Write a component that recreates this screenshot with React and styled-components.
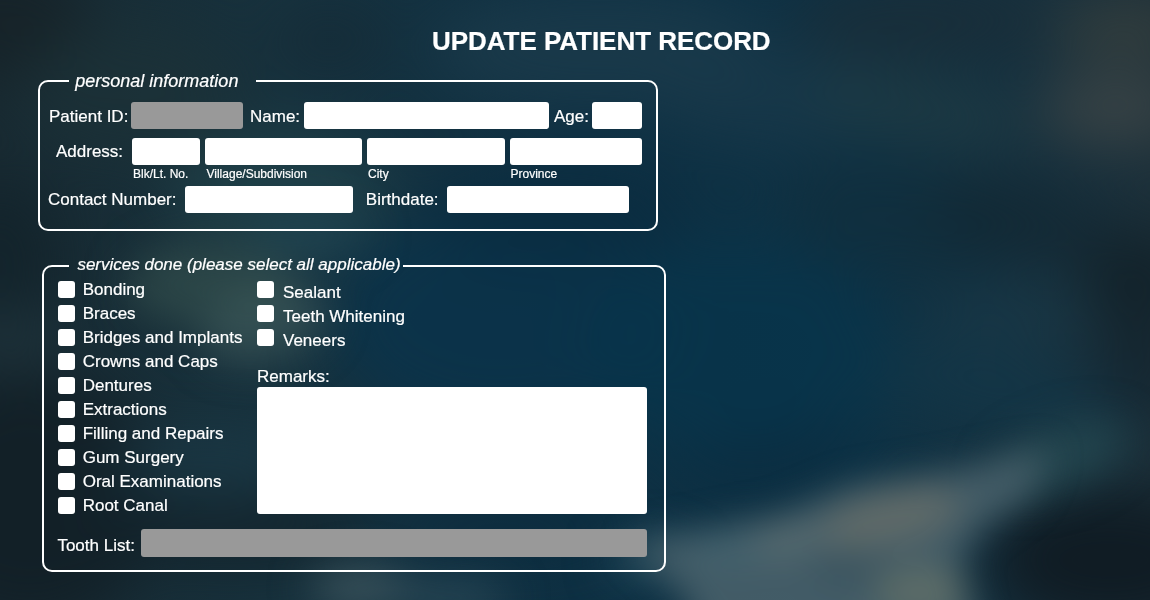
import React from "react";
import styled, { createGlobalStyle } from "styled-components";

const GlobalStyle = createGlobalStyle`
  *, *::before, *::after { box-sizing: border-box; }
  body { margin: 0; background: #102d3e; }
`;

const Page = styled.main`
  position: relative;
  isolation: isolate;
  overflow: hidden;
  width: 1150px;
  height: 600px;
  padding: 26px 0 0 38px;
  color: #fff;
  font-family: "Liberation Sans", Arial, sans-serif;
  font-size: 17px;
  -webkit-text-stroke: 0.2px #fff;
`;

const Backdrop = styled.svg`
  position: absolute;
  inset: 0;
  z-index: -1;
  width: 100%;
  height: 100%;
`;

const Title = styled.h1`
  margin: 0 0 15px 394px;
  font-size: 26px;
  line-height: 30px;
  font-weight: 700;
  letter-spacing: -0.04px;
  white-space: nowrap;
`;

const Panel = styled.fieldset`
  display: block;
  width: ${(p) => p.$width}px;
  height: ${(p) => p.$height}px;
  min-width: 0;
  margin: ${(p) => p.$margin || "0"};
  padding: ${(p) => p.$padding};
  border: 2px solid #fff;
  border-radius: 10px;
`;

const Legend = styled.legend`
  width: ${(p) => p.$width}px;
  height: 20px;
  margin-left: ${(p) => p.$offset}px;
  padding: 0 0 0 ${(p) => p.$inset}px;
  font-size: ${(p) => p.$size}px;
  line-height: ${(p) => p.$line}px;
  font-style: italic;
  white-space: nowrap;
`;

const Row = styled.div`
  display: flex;
  align-items: flex-start;
  height: ${(p) => p.$height || 27}px;
  margin-top: ${(p) => p.$gap || 0}px;
`;

const Label = styled.label`
  flex: none;
  width: ${(p) => p.$width}px;
  padding-left: ${(p) => p.$inset || 0}px;
  line-height: ${(p) => p.$line || 28}px;
  white-space: nowrap;
`;

const Input = styled.input`
  display: block;
  flex: none;
  width: ${(p) => p.$width}px;
  height: ${(p) => p.$height || 27}px;
  margin: 0;
  padding: 0 6px;
  border: 0;
  border-radius: 3px;
  background: ${(p) => (p.readOnly ? "#999" : "#fff")};
  font: inherit;
  color: #111;
`;

const AddressParts = styled.div`
  display: flex;
  gap: 5px;
`;

const AddressPart = styled.div`
  width: ${(p) => p.$width}px;
`;

const Hint = styled.div`
  padding-left: ${(p) => p.$inset}px;
  margin-top: 2px;
  font-size: 12px;
  line-height: 14px;
  white-space: nowrap;
`;

const Services = styled.div`
  display: grid;
  grid-template-columns: 199px 390px;
`;

const ServiceList = styled.div`
  display: grid;
  grid-auto-rows: 24px;
`;

const Service = styled.label`
  display: flex;
  align-items: flex-start;
  gap: ${(p) => (p.$lowered ? 9 : 7.7)}px;
  line-height: 17px;
  white-space: nowrap;

  span { margin-top: ${(p) => (p.$lowered ? 3 : 0)}px; }
`;

const Checkbox = styled.input`
  appearance: none;
  flex: none;
  width: 17px;
  height: 17px;
  margin: 0;
  border-radius: 3px;
  background: #fff;
`;

const Remarks = styled.textarea`
  display: block;
  width: 390px;
  height: 127px;
  margin: 0;
  padding: 6px;
  border: 0;
  border-radius: 3px;
  background: #fff;
  resize: none;
`;

const RemarksLabel = styled.label`
  display: block;
  margin-top: 14px;
  padding-bottom: 1px;
  line-height: 19px;
`;

const ToothRow = styled(Row)`
  margin-left: -0.6px;

  input { margin-left: 0.6px; }
`;

const FIRST = ["Bonding", "Braces", "Bridges and Implants", "Crowns and Caps", "Dentures", "Extractions", "Filling and Repairs", "Gum Surgery", "Oral Examinations", "Root Canal"];
const SECOND = ["Sealant", "Teeth Whitening", "Veneers"];
const ADDRESS = [
  { name: "Blk/Lt. No.", width: 68, inset: 1 },
  { name: "Village/Subdivision", width: 157, inset: 1.5 },
  { name: "City", width: 138, inset: 1 },
  { name: "Province", width: 132, inset: 0.5 },
];

/* Soft patches of light and shade: [cx, cy, rx, ry, rotation, colour, opacity] */
const WIDE = [
  [0, 20, 90, 60, 0, "#162228", 0.9],
  [0, 260, 60, 80, 0, "#13232b", 0.9],
  [10, 340, 60, 25, 0, "#243a43", 0.7],
  [30, 500, 130, 130, 0, "#121f26", 0.85],
  [230, 530, 140, 40, 0, "#13232c", 0.85],
  [210, 465, 100, 30, 0, "#1b3b48", 0.8],
  [130, 90, 110, 70, 0, "#1d3238", 0.7],
  [280, 190, 110, 60, 0, "#22454b", 0.7],
  [330, 40, 60, 30, 0, "#152a35", 0.7],
  [500, 320, 170, 110, 0, "#0a334b", 0.8],
  [560, 215, 130, 45, 0, "#0a2c40", 0.8],
  [740, 350, 150, 110, 0, "#07344b", 0.8],
  [600, 50, 170, 60, 0, "#1c3b4b", 0.8],
  [780, 100, 120, 50, 0, "#1a394a", 0.7],
  [920, 110, 110, 35, 10, "#1f3b44", 0.8],
  [920, 20, 130, 40, 0, "#1a2e38", 0.9],
  [900, 220, 120, 60, 10, "#102e3d", 0.8],
  [1020, 220, 90, 40, 10, "#132833", 0.8],
  [1140, 280, 60, 50, 0, "#122129", 0.9],
  [1010, 315, 90, 25, 0, "#1a3a4a", 0.7],
  [1140, 370, 50, 50, 0, "#14242e", 0.8],
  [1000, 390, 130, 35, 10, "#133749", 0.8],
  [1110, 560, 120, 70, 0, "#101c24", 1],
  [770, 460, 90, 25, -10, "#0a2b3e", 0.7],
  [500, 530, 120, 25, 0, "#0b2a3d", 0.8],
  [1125, 28, 75, 22, 0, "#42463f", 0.8],
  [1115, 108, 75, 35, 0, "#3d4647", 0.9],
];

const NARROW = [
  [210, 285, 85, 42, 0, "#36524f", 0.65],
  [265, 325, 65, 36, -15, "#456060", 0.55],
  [310, 235, 60, 25, 0, "#22495a", 0.5],
  [1060, 458, 70, 28, -20, "#264a52", 0.85],
  [360, 588, 50, 20, 0, "#435a62", 0.9],
  [450, 598, 60, 14, 0, "#345461", 0.8],
  [650, 560, 45, 24, 0, "#23495a", 0.8],
];

const GLOW = [
  [890, 518, 72, 26, -12, "#696f6a", 0.75],
  [785, 540, 45, 18, -10, "#5d6d72", 0.7],
  [920, 592, 48, 26, 0, "#637068", 0.8],
  [850, 570, 42, 15, 0, "#3b525c", 0.8],
  [725, 550, 38, 18, 0, "#43626f", 0.7],
];

const patch = ([cx, cy, rx, ry, angle, fill, opacity], i) => (
  <ellipse key={i} cx={cx} cy={cy} rx={rx} ry={ry} fill={fill} opacity={opacity} transform={`rotate(${angle} ${cx} ${cy})`} />
);

function Blur({ id, amount }) {
  return (
    <filter id={id} filterUnits="userSpaceOnUse" x="-200" y="-200" width="1550" height="1000" colorInterpolationFilters="sRGB">
      <feGaussianBlur stdDeviation={amount} />
    </filter>
  );
}

function BlurredScene() {
  return (
    <Backdrop viewBox="0 0 1150 600" aria-hidden="true">
      <defs>
        <linearGradient id="base" x1="0" x2="1" y1="0" y2="0">
          <stop offset="0" stopColor="#182a32" />
          <stop offset="0.25" stopColor="#17323e" />
          <stop offset="0.5" stopColor="#0e3043" />
          <stop offset="0.75" stopColor="#0e3245" />
          <stop offset="1" stopColor="#1c303a" />
        </linearGradient>
        <Blur id="wide" amount={29} />
        <Blur id="narrow" amount={21} />
        <Blur id="glow" amount={17} />
      </defs>
      <rect width="1150" height="600" fill="url(#base)" />
      <g filter="url(#wide)">{WIDE.map(patch)}</g>
      <g filter="url(#narrow)">{NARROW.map(patch)}</g>
      <g filter="url(#glow)">
        <path d="M630 545 L700 530 L780 515 L850 486 L950 470 L1050 450 L1030 495 L980 530 L960 560 L985 660 L710 660 L680 590 Z" fill="#48606a" opacity="0.9" />
        {GLOW.map(patch)}
      </g>
    </Backdrop>
  );
}

function ServiceOption({ name, lowered }) {
  return (
    <Service $lowered={lowered}>
      <Checkbox type="checkbox" />
      <span>{name}</span>
    </Service>
  );
}

export default function App() {
  return (
    <Page>
      <GlobalStyle />
      <BlurredScene />
      <Title>UPDATE PATIENT RECORD</Title>

      <Panel $width={620} $height={160} $padding="11px 0 0 8px">
        <Legend $width={187} $offset={21} $inset={6.3} $size={18} $line={20}>personal information</Legend>
        <Row>
          <Label $width={83} $inset={1} $line={30}>Patient ID:</Label>
          <Input $width={112} readOnly />
          <Label $width={61} $inset={7} $line={30}>Name:</Label>
          <Input $width={245} />
          <Label $width={43} $inset={5} $line={30}>Age:</Label>
          <Input $width={50} />
        </Row>
        <Row $gap={9} $height={43}>
          <Label $width={84} $inset={8}>Address:</Label>
          <AddressParts>
            {ADDRESS.map((part) => (
              <AddressPart key={part.name} $width={part.width}>
                <Input $width={part.width} />
                <Hint $inset={part.inset}>{part.name}</Hint>
              </AddressPart>
            ))}
          </AddressParts>
        </Row>
        <Row $gap={5}>
          <Label $width={137}>Contact Number:</Label>
          <Input $width={168} />
          <Label $width={94} $inset={12.8}>Birthdate:</Label>
          <Input $width={182} />
        </Row>
      </Panel>

      <Panel $width={624} $height={316} $margin="25px 0 0 4px" $padding="5px 0 0 14px">
        <Legend $width={334} $offset={11} $inset={8.4} $size={17} $line={18}>services done (please select all applicable)</Legend>
        <Services>
          <ServiceList>
            {FIRST.map((name) => <ServiceOption key={name} name={name} />)}
          </ServiceList>
          <div>
            <ServiceList>
              {SECOND.map((name) => <ServiceOption key={name} name={name} lowered />)}
            </ServiceList>
            <RemarksLabel htmlFor="remarks">Remarks:</RemarksLabel>
            <Remarks id="remarks" />
          </div>
        </Services>
        <ToothRow $gap={8} $height={28}>
          <Label $width={83} $line={34}>Tooth List:</Label>
          <Input $width={506} $height={28} readOnly />
        </ToothRow>
      </Panel>
    </Page>
  );
}
